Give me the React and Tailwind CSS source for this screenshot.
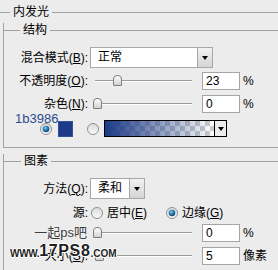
import React from "react";

const Key = ({ k }) => (
  <>
    (<span className="underline underline-offset-[1px]">{k}</span>)
  </>
);

const GroupTitle = ({ title, lead }) => (
  <div className="flex items-center h-[15px]">
    <div className={`${lead} h-px bg-[#a3a3a3]`} />
    <span className="px-[3px] leading-[15px]">{title}</span>
    <div className="flex-1 h-px bg-[#a3a3a3]" />
  </div>
);

const Select = ({ value, width }) => (
  <div className={`flex h-[21px] ${width} border border-[#a8a8a8] bg-white`}>
    <div className="flex-1 pl-[7px] leading-[19px]">{value}</div>
    <div className="w-[15px] border-l border-[#a8a8a8] bg-linear-to-b from-[#f2f2f2] to-[#d4d4d4] flex items-center justify-center">
      <div className="w-0 h-0 border-l-[3px] border-r-[3px] border-t-[4px] border-l-transparent border-r-transparent border-t-black" />
    </div>
  </div>
);

const Slider = ({ value, max }) => {
  const left = Math.round(-2 + (value / max) * 87);
  return (
    <div className="relative ml-[7px] w-[97px] h-[18px] flex items-center">
      <div className="w-full h-[2px] border-t border-[#9c9c9c] bg-white" />
      <div
        className="absolute top-[3px] w-[9px] h-[11px] rounded-t-[4px] rounded-b-[1px] border border-[#7d7d7d] bg-linear-to-b from-white to-[#d2d2d2]"
        style={{ left }}
      />
    </div>
  );
};

const NumBox = ({ value }) => (
  <div className="ml-[10px] w-[38px] h-[18px] border border-[#a5a5a5] bg-white pl-[3px] leading-[16px]">
    {value}
  </div>
);

const Radio = ({ checked, id }) => (
  <svg width="12" height="12" viewBox="0 0 12 12" className="shrink-0">
    <defs>
      <linearGradient id={`${id}-bg`} x1="0" y1="0" x2="0" y2="1">
        <stop offset="0" stopColor="#d9d9d9" />
        <stop offset="1" stopColor="#fafafa" />
      </linearGradient>
      <radialGradient id={`${id}-dot`} cx="0.4" cy="0.35" r="0.7">
        <stop offset="0" stopColor="#8fd0f2" />
        <stop offset="0.45" stopColor="#2a7fb8" />
        <stop offset="1" stopColor="#0d3f6c" />
      </radialGradient>
    </defs>
    <circle cx="6" cy="6" r="5.5" fill={`url(#${id}-bg)`} stroke="#8f8f8f" />
    {checked && <circle cx="6" cy="6" r="3.3" fill={`url(#${id}-dot)`} />}
  </svg>
);

const GlowGradient = () => (
  <div className="ml-[5px] w-[123px] h-[17px] border border-black flex">
    <svg width="109" height="15" className="shrink-0">
      <defs>
        <pattern id="chk" width="10" height="10" patternUnits="userSpaceOnUse">
          <rect width="10" height="10" fill="#ffffff" />
          <rect width="5" height="5" fill="#cccccc" />
          <rect x="5" y="5" width="5" height="5" fill="#cccccc" />
        </pattern>
        <linearGradient id="glow" x1="0" y1="0" x2="1" y2="0">
          <stop offset="0" stopColor="#1b3986" />
          <stop offset="1" stopColor="#1b3986" stopOpacity="0" />
        </linearGradient>
      </defs>
      <rect width="109" height="15" fill="url(#chk)" />
      <rect width="109" height="15" fill="url(#glow)" />
    </svg>
    <div className="flex-1 border-l border-black bg-[#ececec] flex items-center justify-center">
      <div className="w-0 h-0 border-l-[3px] border-r-[3px] border-t-[4px] border-l-transparent border-r-transparent border-t-black" />
    </div>
  </div>
);

export default function App() {
  return (
    <div className="relative w-[278px] h-[270px] overflow-hidden bg-[#ececec] text-[12px] text-black [font-family:'Liberation_Sans','Noto_Sans_CJK_SC',sans-serif]">
      <div className="pt-[5px]">
        <GroupTitle title="内发光" lead="w-[10px]" />

        {/* 结构 */}
        <div className="ml-[3px] mt-[10px] border-l border-b border-[#a3a3a3] pb-[10px]">
          <div className="-mt-[7px]">
            <GroupTitle title="结构" lead="w-[16px]" />
          </div>

          <div className="flex items-center mt-[9px] h-[21px]">
            <div className="w-[84px] text-right">
              混合模式<Key k="B" />:
            </div>
            <div className="ml-[2px]">
              <Select value="正常" width="w-[123px]" />
            </div>
          </div>

          <div className="flex items-center mt-[4px] h-[18px]">
            <div className="w-[84px] text-right">
              不透明度<Key k="O" />:
            </div>
            <Slider value={23} max={100} />
            <NumBox value="23" />
            <span className="ml-[3px]">%</span>
          </div>

          <div className="flex items-center mt-[5px] h-[18px]">
            <div className="w-[84px] text-right">
              杂色<Key k="N" />:
            </div>
            <Slider value={0} max={100} />
            <NumBox value="0" />
            <span className="ml-[3px]">%</span>
          </div>

          <div className="h-[10px] pl-[11px] text-[13px] leading-[11px] text-[#2b4a8c]">1b3986</div>

          <div className="flex items-center -mt-[3px] h-[17px]">
            <div className="ml-[36px]">
              <Radio checked id="r1" />
            </div>
            <div className="ml-[6px] w-[15px] h-[16px] bg-[#1d3a88] border border-[#34509a]" />
            <div className="ml-[14px]">
              <Radio id="r2" />
            </div>
            <GlowGradient />
          </div>
        </div>

        {/* 图素 */}
        <div className="ml-[3px] mt-[13px] border-l border-[#a3a3a3] h-[120px]">
          <div className="-mt-[7px]">
            <GroupTitle title="图素" lead="w-[17px]" />
          </div>

          <div className="flex items-center mt-[9px] h-[21px]">
            <div className="w-[84px] text-right">
              方法<Key k="Q" />:
            </div>
            <div className="ml-[2px]">
              <Select value="柔和" width="w-[55px]" />
            </div>
          </div>

          <div className="flex items-center mt-[7px] h-[13px]">
            <div className="w-[84px] text-right">源:</div>
            <div className="ml-[3px] flex items-center w-[75px]">
              <Radio id="r3" />
              <span className="ml-[4px]">
                居中<Key k="E" />
              </span>
            </div>
            <Radio checked id="r4" />
            <span className="ml-[4px]">
              边缘<Key k="G" />
            </span>
          </div>

          <div className="flex items-center mt-[5px] h-[18px]">
            <div className="w-[84px] pr-[1px] text-right text-[13px] text-[#3c3c3c] [text-shadow:0_0_2px_#ffffff]">
              一起ps吧
            </div>
            <Slider value={0} max={100} />
            <NumBox value="0" />
            <span className="ml-[3px]">%</span>
          </div>

          <div className="flex items-center mt-[5px] h-[18px]">
            <div className="w-[84px] text-right">
              大小<Key k="S" />:
            </div>
            <Slider value={5} max={250} />
            <NumBox value="5" />
            <span className="ml-[3px]">像素</span>
          </div>
        </div>
      </div>

      {/* watermark */}
      <div className="absolute left-[10px] top-[243px] flex items-end font-bold text-[#1f1f1f] leading-none [text-shadow:1px_0_#fff,-1px_0_#fff,0_1px_#fff,0_-1px_#fff]">
        <span className="text-[10px] tracking-[-0.3px]">WWW.</span>
        <span className="text-[16px] tracking-[0.6px]">17PS8</span>
        <span className="text-[10px]">.COM</span>
      </div>
    </div>
  );
}
